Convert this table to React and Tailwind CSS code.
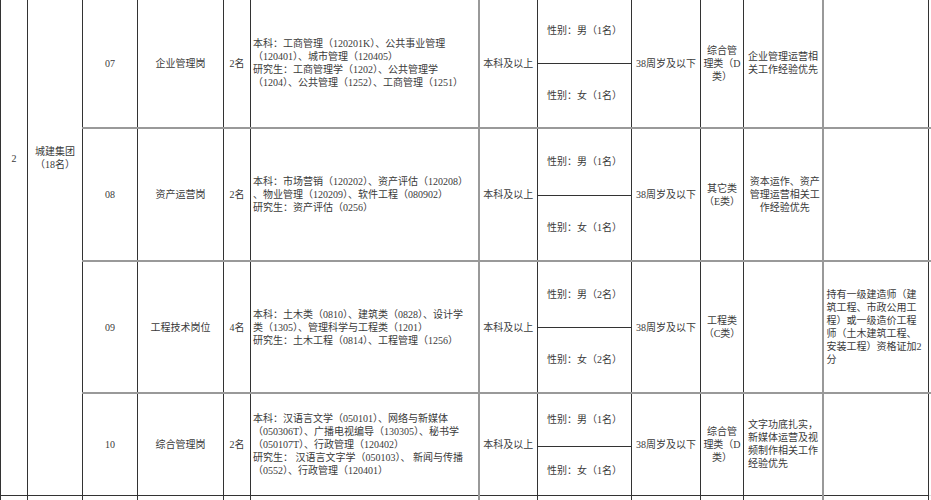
import React from "react";

const rows = [
  {
    id: "07",
    name: "企业管理岗",
    num: "2名",
    major: [
      "本科：工商管理（120201K）、公共事业管理",
      "（120401）、城市管理（120405）",
      "研究生：工商管理学（1202）、公共管理学",
      "（1204）、公共管理（1252）、工商管理（1251）",
    ],
    male: "性别：男（1名）",
    female: "性别：女（1名）",
    cat: ["综合管", "理类（D", "类）"],
    req: ["企业管理运营相", "关工作经验优先"],
    reqCenter: false,
    extra: [],
    h: ["h-[65px]", "h-[65px]"],
  },
  {
    id: "08",
    name: "资产运营岗",
    num: "2名",
    major: [
      "本科：市场营销（120202）、资产评估（120208）",
      "、物业管理（120209）、软件工程（080902）",
      "研究生：资产评估（0256）",
    ],
    male: "性别：男（1名）",
    female: "性别：女（1名）",
    cat: ["其它类", "（E类）"],
    req: ["资本运作、资产", "管理运营相关工", "作经验优先"],
    reqCenter: true,
    extra: [],
    h: ["h-[67px]", "h-[66px]"],
  },
  {
    id: "09",
    name: "工程技术岗位",
    num: "4名",
    major: [
      "本科：土木类（0810）、建筑类（0828）、设计学",
      "类（1305）、管理科学与工程类（1201）",
      "研究生：土木工程（0814）、工程管理（1256）",
    ],
    male: "性别：男（2名）",
    female: "性别：女（2名）",
    cat: ["工程类", "（C类）"],
    req: [],
    reqCenter: false,
    extra: [
      "持有一级建造师（建",
      "筑工程、市政公用工",
      "程）或一级造价工程",
      "师（土木建筑工程、",
      "安装工程）资格证加2",
      "分",
    ],
    h: ["h-[66px]", "h-[66px]"],
  },
  {
    id: "10",
    name: "综合管理岗",
    num: "2名",
    major: [
      "本科：汉语言文学（050101）、网络与新媒体",
      "（050306T）、广播电视编导（130305）、秘书学",
      "（050107T）、行政管理（120402）",
      "研究生： 汉语言文字学（050103）、 新闻与传播",
      "（0552）、行政管理（120401）",
    ],
    male: "性别：男（1名）",
    female: "性别：女（1名）",
    cat: ["综合管", "理类（D", "类）"],
    req: ["文字功底扎实，", "新媒体运营及视", "频制作相关工作", "经验优先"],
    reqCenter: false,
    extra: [],
    h: ["h-[53px]", "h-[49px]"],
  },
];

const cell = "border border-[#333] align-middle p-0";
const top = "border-t-2 border-t-[#999]";

export default function App() {
  return (
    <div className="w-[931px] h-[500px] overflow-hidden bg-white text-[#3a3a3a] text-[10px] leading-[13px] font-['Liberation_Serif','Noto_Sans_CJK_SC',serif]">
      <table className="mt-[-3px] border-collapse table-fixed w-[940px]">
        <colgroup>
          <col className="w-[27px]" />
          <col className="w-[55px]" />
          <col className="w-[55px]" />
          <col className="w-[86px]" />
          <col className="w-[27px]" />
          <col className="w-[228px]" />
          <col className="w-[59px]" />
          <col className="w-[94px]" />
          <col className="w-[69px]" />
          <col className="w-[43px]" />
          <col className="w-[79px]" />
          <col className="w-[106px]" />
          <col className="w-[12px]" />
        </colgroup>
        <tbody>
          {rows.map((r, idx) => (
            <React.Fragment key={r.id}>
              <tr className={r.h[0]}>
                {idx === 0 && (
                  <>
                    <td rowSpan={8} className={`${cell} ${top} align-top text-center pt-[153px]`}>
                      2
                    </td>
                    <td rowSpan={8} className={`${cell} ${top} align-top text-center pt-[146px]`}>
                      <div>城建集团</div>
                      <div>（18名）</div>
                    </td>
                  </>
                )}
                <td rowSpan={2} className={`${cell} ${top} text-center`}>{r.id}</td>
                <td rowSpan={2} className={`${cell} ${top} text-center`}>{r.name}</td>
                <td rowSpan={2} className={`${cell} ${top} text-center whitespace-nowrap`}>{r.num}</td>
                <td rowSpan={2} className={`${cell} ${top} border-r-2 border-r-[#999] pl-[2px] whitespace-nowrap`}>
                  {r.major.map((l, i) => (
                    <div key={i}>{l}</div>
                  ))}
                </td>
                <td rowSpan={2} className={`${cell} ${top} text-center whitespace-nowrap`}>本科及以上</td>
                <td className={`${cell} ${top} text-center whitespace-nowrap`}>{r.male}</td>
                <td rowSpan={2} className={`${cell} ${top} text-center whitespace-nowrap`}>38周岁及以下</td>
                <td rowSpan={2} className={`${cell} ${top} text-center whitespace-nowrap`}>
                  {r.cat.map((l, i) => (
                    <div key={i}>{l}</div>
                  ))}
                </td>
                <td
                  rowSpan={2}
                  className={`${cell} ${top} border-r-2 border-r-[#999] pl-[4px] whitespace-nowrap ${
                    r.reqCenter ? "text-center" : "text-left"
                  }`}
                >
                  {r.req.map((l, i) => (
                    <div key={i}>{l}</div>
                  ))}
                </td>
                <td rowSpan={2} className={`${cell} ${top} pl-[3px] whitespace-nowrap`}>
                  {r.extra.map((l, i) => (
                    <div key={i}>{l}</div>
                  ))}
                </td>
                <td rowSpan={2} className={`${cell} ${top} border-[#ddd]`}></td>
              </tr>
              <tr className={r.h[1]}>
                <td className={`${cell} text-center whitespace-nowrap`}>{r.female}</td>
              </tr>
            </React.Fragment>
          ))}
          <tr className="h-[20px]">
            <td className={cell}></td>
            <td className={cell}></td>
            <td className={cell}></td>
            <td className={cell}></td>
            <td className={cell}></td>
            <td className={`${cell} border-r-2 border-r-[#999]`}></td>
            <td className={cell}></td>
            <td className={cell}></td>
            <td className={cell}></td>
            <td className={cell}></td>
            <td className={`${cell} border-r-2 border-r-[#999]`}></td>
            <td className={cell}></td>
            <td className={`${cell} border-[#ddd]`}></td>
          </tr>
        </tbody>
      </table>
    </div>
  );
}
